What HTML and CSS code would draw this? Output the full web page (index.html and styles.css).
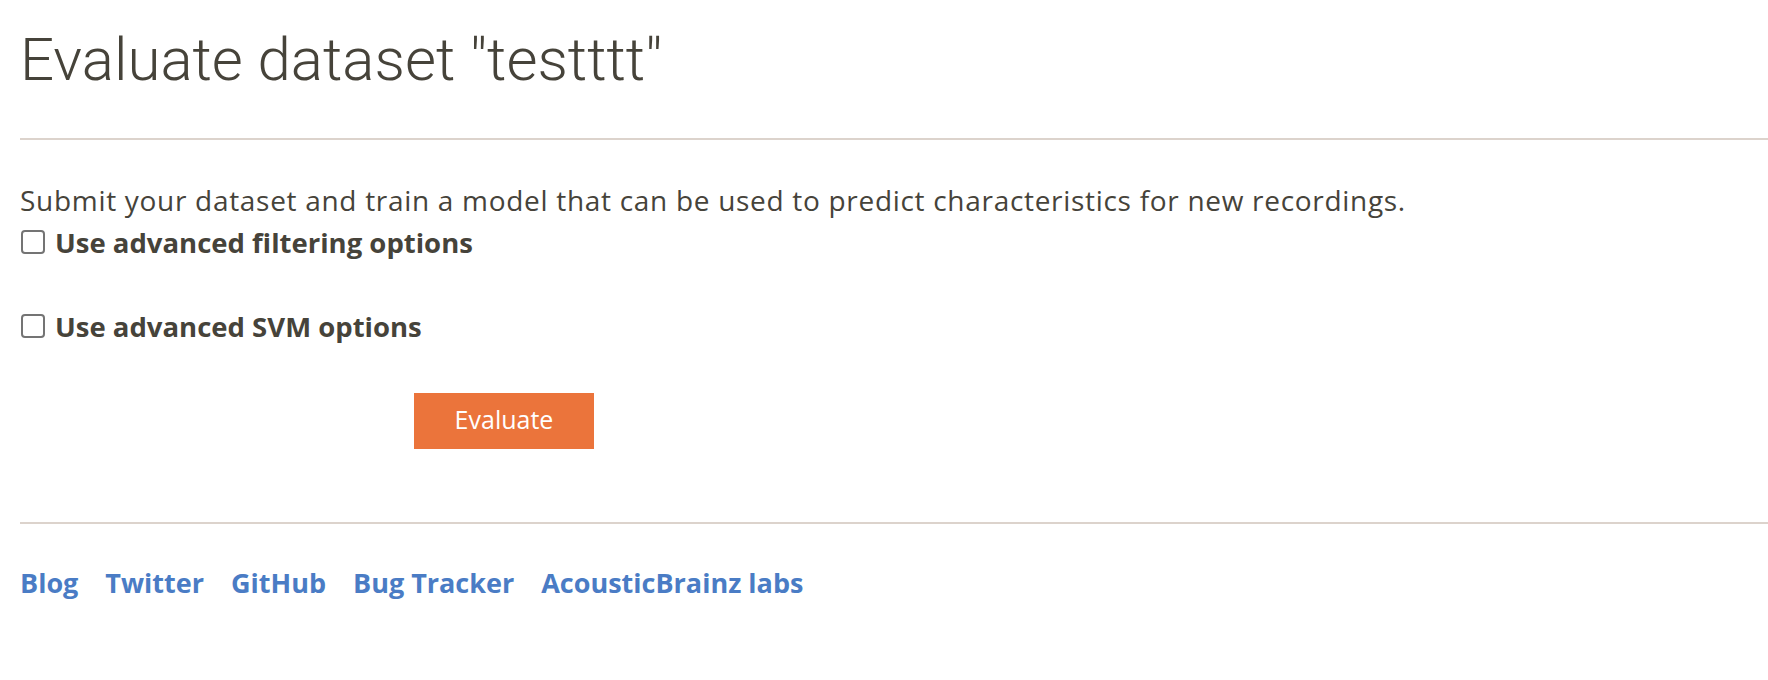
FILE: index.html
```html
<!DOCTYPE html>
<html lang="en">
<head>
<meta charset="utf-8">
<title>Evaluate dataset</title>
<link rel="stylesheet" href="styles.css">
</head>
<body>
<div class="page">
  <h1 class="title">Evaluate dataset "testttt"</h1>
  <hr class="rule rule-top">
  <p class="intro">Submit your dataset and train a model that can be used to predict characteristics for new recordings.</p>
  <form class="eval-form">
    <label class="option option-first"><input type="checkbox" class="check"><span class="option-text">Use advanced filtering options</span></label>
    <label class="option option-second"><input type="checkbox" class="check"><span class="option-text">Use advanced SVM options</span></label>
    <div class="actions"><button type="button" class="btn">Evaluate</button></div>
  </form>
  <hr class="rule rule-bottom">
  <nav class="footer-links">
    <a href="#">Blog</a>
    <a href="#">Twitter</a>
    <a href="#">GitHub</a>
    <a href="#">Bug Tracker</a>
    <a href="#">AcousticBrainz labs</a>
  </nav>
</div>
</body>
</html>
```
FILE: styles.css
```css
html, body {
  margin: 0;
  padding: 0;
  background: #ffffff;
}
body {
  color: #46433a;
  font-family: "Open Sans", "Liberation Sans", sans-serif;
  width: 1768px;
  overflow: hidden;
}
.page {
  padding-left: 20px;
}
.title {
  margin: 27px 0 45px;
  font-family: Roboto, "Liberation Sans", sans-serif;
  font-weight: 300;
  font-size: 60px;
  line-height: 66px;
  letter-spacing: 0;
  color: #46433a;
}
.rule {
  border: 0;
  border-top: 2px solid #dcd3cc;
  margin: 0;
  height: 0;
}
.intro {
  margin: 43px 0 0;
  font-size: 28px;
  line-height: 34px;
  letter-spacing: 0.7px;
  white-space: nowrap;
}
.eval-form {
  margin: 0;
}
.option {
  display: flex;
  align-items: center;
  gap: 10px;
  height: 34px;
  font-weight: 700;
  font-size: 27.5px;
  line-height: 34px;
}
.option-first {
  margin-top: 9px;
}
.option-second {
  margin-top: 50px;
}
.check {
  appearance: none;
  -webkit-appearance: none;
  margin: 0 0 3px 1px;
  width: 24px;
  height: 24px;
  box-sizing: border-box;
  border: 2px solid #747474;
  border-radius: 4px;
  background: #fff;
  flex: none;
}
.actions {
  margin-top: 48.5px;
  padding-left: 394px;
}
.btn {
  display: block;
  width: 180px;
  height: 56px;
  box-sizing: border-box;
  border: 0;
  border-radius: 0;
  background: #eb743b;
  color: #ffffff;
  font-family: "Open Sans", "Liberation Sans", sans-serif;
  font-size: 25px;
  line-height: 52px;
  padding: 0 0 4px;
  margin: 0;
}
.rule-bottom {
  margin-top: 73px;
}
.footer-links {
  display: flex;
  gap: 27px;
  margin-top: 42.5px;
  font-size: 27px;
  line-height: 34px;
  font-weight: 700;
}
.footer-links a {
  color: #4a7cc5;
  text-decoration: none;
}
```
